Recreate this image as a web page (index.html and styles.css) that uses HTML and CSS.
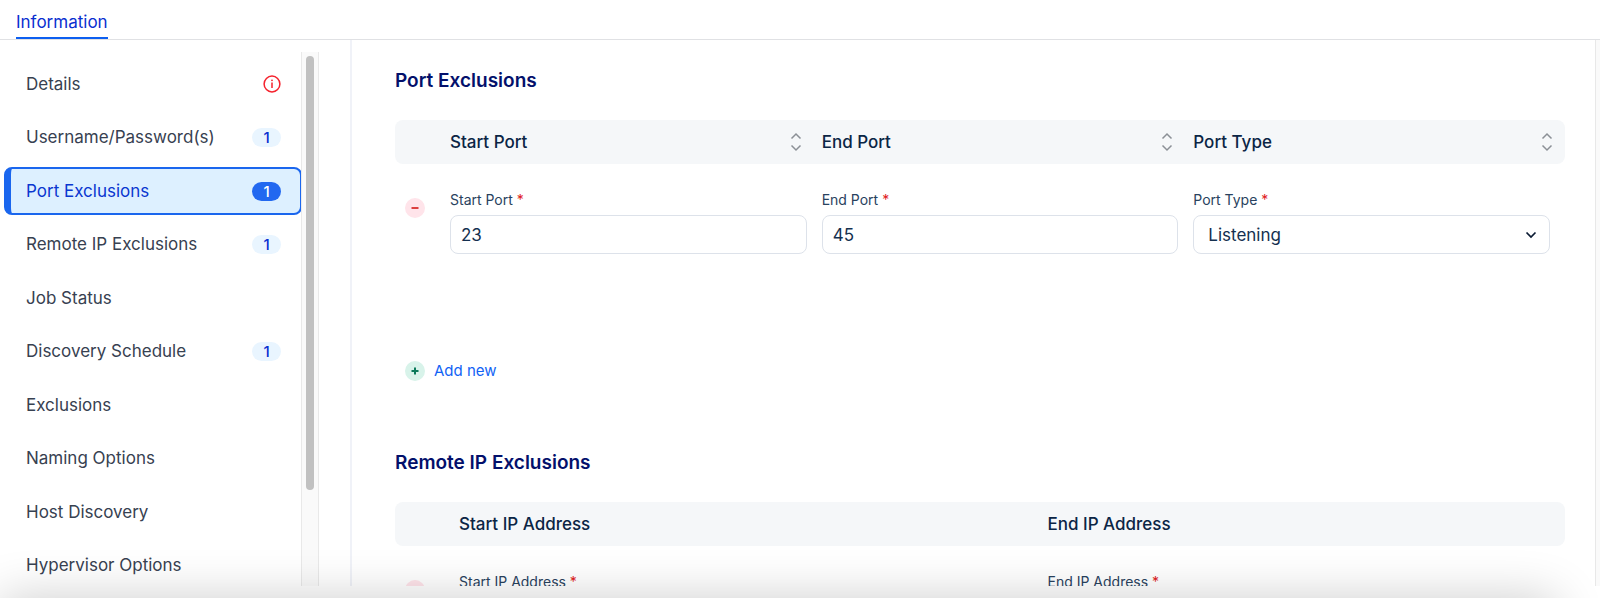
FILE: index.html
```html
<!DOCTYPE html>
<html lang="en">
<head>
<meta charset="utf-8">
<title>Information</title>
<link rel="stylesheet" href="styles.css">
</head>
<body>
<svg class="sprite" aria-hidden="true">
  <symbol id="sort" viewBox="0 0 12 20"><path d="M1.500 6.500 6 2l4.500 4.500M1.500 13.500 6 18l4.500-4.500"/></symbol>
  <symbol id="minus" viewBox="0 0 20 20"><path d="M6.500 10h7"/></symbol>
  <symbol id="plus" viewBox="0 0 20 20"><path d="M6.500 10h7M10 6.500v7"/></symbol>
</svg>
<header class="tabs"><a class="tab" href="#information">Information</a></header>
<div class="layout">
  <aside class="sidebar">
    <nav class="menu" aria-label="Sections">
      <a class="item" href="#details">Details
        <svg class="info" viewBox="0 0 18 18" aria-hidden="true"><circle cx="9" cy="9" r="7.900"/><path d="M9 7.500v5.500"/><circle class="dot" cx="9" cy="5.300" r="0.900"/></svg></a>
      <a class="item" href="#credentials">Username/Password(s)<span class="badge">1</span></a>
      <a class="item active" href="#ports">Port Exclusions<span class="badge">1</span></a>
      <a class="item" href="#remote">Remote IP Exclusions<span class="badge">1</span></a>
      <a class="item" href="#job">Job Status</a>
      <a class="item" href="#schedule">Discovery Schedule<span class="badge">1</span></a>
      <a class="item" href="#exclusions">Exclusions</a>
      <a class="item" href="#naming">Naming Options</a>
      <a class="item" href="#host">Host Discovery</a>
      <a class="item" href="#hypervisor">Hypervisor Options</a>
    </nav>
    <div class="track"><div class="thumb"></div></div>
  </aside>
  <main class="content">
    <section class="ports" id="ports">
      <h2>Port Exclusions</h2>
      <table class="grid">
        <colgroup><col class="col-action"><col><col><col></colgroup>
        <thead>
          <tr>
            <th></th>
            <th><div class="head">Start Port<button class="sort" aria-label="Sort by start port"><svg><use href="#sort"/></svg></button></div></th>
            <th><div class="head">End Port<button class="sort" aria-label="Sort by end port"><svg><use href="#sort"/></svg></button></div></th>
            <th><div class="head">Port Type<button class="sort" aria-label="Sort by port type"><svg><use href="#sort"/></svg></button></div></th>
          </tr>
        </thead>
        <tbody>
          <tr>
            <td><button class="round remove" aria-label="Remove row"><svg><use href="#minus"/></svg></button></td>
            <td><label for="start">Start Port <span class="req">*</span></label><input class="field" id="start" type="text" value="23"></td>
            <td><label for="end">End Port <span class="req">*</span></label><input class="field" id="end" type="text" value="45"></td>
            <td><label for="type">Port Type <span class="req">*</span></label><div class="pick"><select class="field" id="type"><option>Listening</option></select><svg class="chevron" viewBox="0 0 12 8" aria-hidden="true"><path d="M1.500 1.500 6 6l4.500-4.500"/></svg></div></td>
          </tr>
        </tbody>
      </table>
      <button class="add"><span class="round plus"><svg><use href="#plus"/></svg></span>Add new</button>
    </section>
    <section id="remote">
      <h2>Remote IP Exclusions</h2>
      <table class="grid addresses">
        <colgroup><col class="col-action"><col class="col-start"><col></colgroup>
        <thead><tr><th></th><th>Start IP Address</th><th>End IP Address</th></tr></thead>
        <tbody>
          <tr>
            <td><button class="round remove" aria-label="Remove row"><svg><use href="#minus"/></svg></button></td>
            <td><label for="ip-start">Start IP Address <span class="req">*</span></label><input class="field" id="ip-start" type="text"></td>
            <td><label for="ip-end">End IP Address <span class="req">*</span></label><input class="field" id="ip-end" type="text"></td>
          </tr>
        </tbody>
      </table>
    </section>
  </main>
  <div class="gutter"></div>
</div>
<div class="shade"></div>
</body>
</html>
```
FILE: styles.css
```css
* { box-sizing: border-box; }
body {
  margin: 0;
  height: 100vh;
  display: flex;
  flex-direction: column;
  position: relative;
  overflow: hidden;
  padding-bottom: 12px;
  background: #fff;
  color: #0b2545;
  font-family: Inter, "Liberation Sans", sans-serif;
  font-size: 17px;
}
button { font: inherit; border: 0; padding: 0; background: none; cursor: pointer; }
a { text-decoration: none; }
.sprite { display: none; }

.tabs {
  flex: none;
  display: flex;
  height: 40px;
  padding: 0 16px;
  border-bottom: 1px solid #e0e1e4;
}
.tab {
  padding-top: 7px;
  line-height: 30px;
  color: #0a2fd0;
  border-bottom: 2px solid #0d5ff0;
}

.layout { flex: 1; min-height: 0; display: flex; }
.sidebar {
  flex: none;
  width: 319px;
  margin-right: 31px;
  padding-top: 12px;
  display: flex;
}
.menu {
  flex: 1;
  padding: 8px 0 0 4px;
  overflow: hidden;
  display: flex;
  flex-direction: column;
  gap: 5px;
}
.item {
  flex: none;
  height: 48px;
  display: flex;
  align-items: center;
  justify-content: space-between;
  padding: 0 20px 0 22px;
  color: #374151;
}
.item:nth-child(odd) { margin-top: 1px; }
.item:first-child { margin-top: 0; }
.item.active {
  margin-right: -1px;
  padding: 0 19px 0 15px;
  color: #0a37d0;
  background: #ddf0ff;
  border: 2px solid #1a66ee;
  border-left-width: 7px;
  border-radius: 8px;
}
.badge {
  width: 29px;
  border-radius: 10px;
  background: #e9f5ff;
  color: #0a2fd0;
  font-size: 15px;
  font-weight: 500;
  line-height: 19px;
  text-align: center;
}
.active .badge { background: #2268f0; color: #fff; }
.info { width: 18px; height: 18px; fill: none; stroke: #f5222d; stroke-width: 1.5; }
.info .dot { fill: #f5222d; stroke: none; }
.track {
  width: 18px;
  padding: 4px;
  background: #fafafa;
  border: solid #e9e9e9;
  border-width: 0 1px;
}
.thumb { height: 82.500%; border-radius: 4px; background: #c1c1c1; }

.content {
  flex: 1;
  min-width: 0;
  overflow: hidden;
  padding: 25px 30px 0 43px;
  border-left: 2px solid #f0f2f8;
}
.gutter { width: 5px; background: #fafafa; border-left: 1px solid #e8e8e8; }
h2 {
  margin: 0 0 23px;
  color: #03106b;
  font-size: 19px;
  font-weight: 600;
  line-height: 32px;
}
.ports { margin-bottom: 66px; }
.grid { width: 100%; table-layout: fixed; border-collapse: separate; border-spacing: 0; }
.col-action { width: 55px; }
.addresses .col-action { width: 64px; }
.addresses .col-start { width: 50.300%; }
.grid th {
  height: 44px;
  padding: 0;
  background: #f5f7f9;
  font-weight: 500;
  text-align: left;
}
.grid th:first-child { border-radius: 8px 0 0 8px; }
.grid th:last-child { border-radius: 0 8px 8px 0; }
.grid td { padding: 26px 15px 0 0; vertical-align: top; }
.grid td:first-child { padding: 34px 0 0 10px; }
.head { display: flex; align-items: center; justify-content: space-between; padding-right: 20px; }
th:last-child .head { padding-right: 12px; }
.sort svg { display: block; width: 12px; height: 20px; fill: none; stroke: #8b9096; stroke-width: 1.5; }
label { display: block; margin-bottom: 5px; font-size: 14px; line-height: 20px; color: #29425e; }
.req { color: #e02020; }
.field {
  display: block;
  width: 100%;
  height: 39px;
  padding: 0 10px;
  border: 1px solid #dde2ea;
  border-radius: 8px;
  background: #fff;
  color: #14304f;
  font: inherit;
  appearance: none;
}
select.field { padding: 0 14px; }
.pick { position: relative; }
.chevron {
  position: absolute;
  right: 13px;
  top: 16px;
  width: 12px;
  height: 8px;
  fill: none;
  stroke: #0b1b33;
  stroke-width: 1.7;
}
.round { display: block; width: 20px; height: 20px; border-radius: 50%; }
.round svg { display: block; width: 20px; height: 20px; fill: none; stroke-width: 2; }
.remove { background: #ffe4ea; stroke: #dc4040; }
.plus { background: #d8f3ea; stroke: #0a7a5a; }
.add {
  display: flex;
  align-items: center;
  gap: 9px;
  margin: 107px 0 0 10px;
  color: #1263f5;
  font-size: 15px;
  line-height: 20px;
}
.shade {
  position: absolute;
  top: 100%;
  left: 0;
  right: 44px;
  height: 60px;
  pointer-events: none;
  box-shadow: 0 0 50px rgba(0, 0, 0, 0.2);
}
```
